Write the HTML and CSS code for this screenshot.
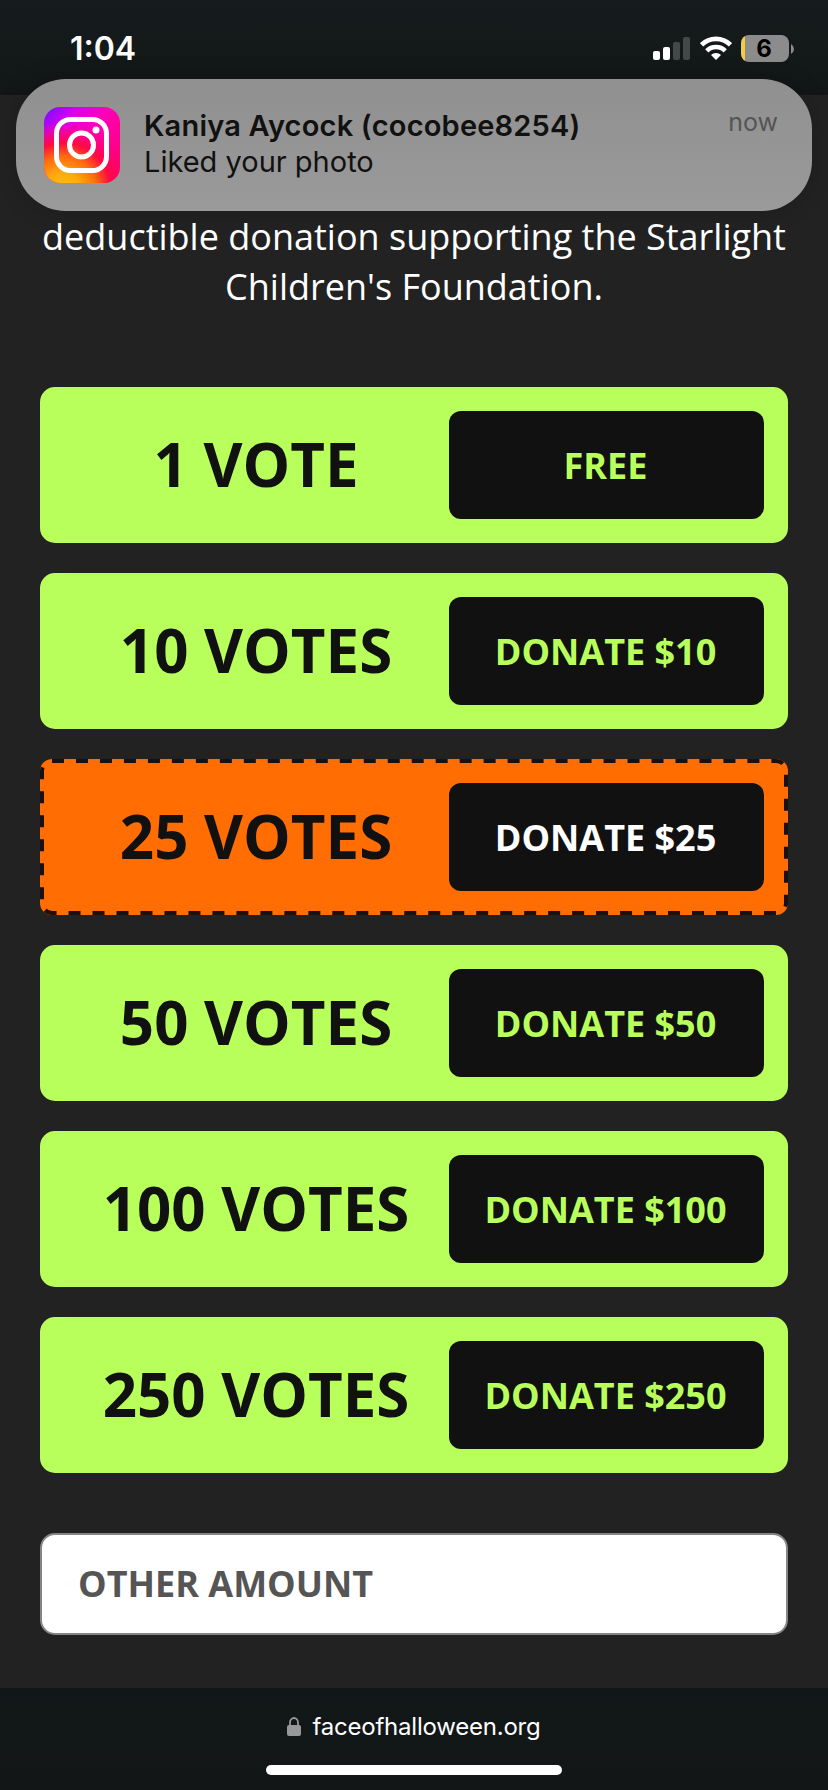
FILE: index.html
```html
<!DOCTYPE html>
<html lang="en">
<head>
<meta charset="utf-8">
<title>Face of Halloween</title>
<link rel="stylesheet" href="styles.css">
</head>
<body>
<div class="screen">
  <header class="status">
    <span class="time">1:04</span>
    <div class="indicators">
      <svg class="signal" width="38" height="24" viewBox="0 0 38 24">
        <rect x="0" y="14" width="7" height="9" rx="2" fill="#fff"/>
        <rect x="10" y="10" width="7" height="13" rx="2" fill="#fff"/>
        <rect x="20" y="5" width="7" height="18" rx="2" fill="#454849"/>
        <rect x="30" y="0" width="7" height="23" rx="2" fill="#454849"/>
      </svg>
      <svg class="wifi" width="32" height="24" viewBox="0 0 32 24">
        <path d="M1.500 8.800A20.500 20.500 0 0 1 30.500 8.800" fill="none" stroke="#fff" stroke-width="4.800"/>
        <path d="M6.800 14.800A13 13 0 0 1 25.200 14.800" fill="none" stroke="#fff" stroke-width="4.600"/>
        <path d="M16 24L11 19A7 7 0 0 1 21 19Z" fill="#fff"/>
      </svg>
      <div class="battery"><span class="charge">6</span></div>
      <svg class="cap" width="3" height="10" viewBox="0 0 3 10"><path d="M0 0Q3 2 3 5T0 10Z" fill="#8c8c8c"/></svg>
    </div>
  </header>

  <section class="notice">
    <svg class="app" width="76" height="76" viewBox="0 0 76 76">
      <defs>
        <linearGradient id="base" x1="0" y1="0" x2="1" y2="1">
          <stop offset="0" stop-color="#6a10ff"/><stop offset=".22" stop-color="#d800f0"/>
          <stop offset=".45" stop-color="#ff00b8"/><stop offset="1" stop-color="#ff0060"/>
        </linearGradient>
        <radialGradient id="warm" cx=".25" cy="1.1" r=".9">
          <stop offset="0" stop-color="#ffc60a"/><stop offset=".27" stop-color="#ffa810"/>
          <stop offset=".5" stop-color="#ff6a10"/><stop offset=".7" stop-color="#ff0a40"/>
          <stop offset="1" stop-color="#ff0070" stop-opacity="0"/>
        </radialGradient>
      </defs>
      <rect width="76" height="76" rx="16" fill="url(#base)"/>
      <rect width="76" height="76" rx="16" fill="url(#warm)"/>
      <rect x="12.500" y="12.500" width="50" height="51" rx="14" fill="none" stroke="#fff" stroke-width="5"/>
      <circle cx="37.500" cy="38" r="12" fill="none" stroke="#fff" stroke-width="5"/>
      <circle cx="52" cy="23" r="3.500" fill="#fff"/>
    </svg>
    <div class="message">
      <div class="sender"><span>Kaniya Aycock (cocobee8254)</span></div>
      <div class="action"><span>Liked your photo</span></div>
    </div>
    <span class="when">now</span>
  </section>

  <main class="page">
    <p class="intro">deductible donation supporting the Starlight<br>Children's Foundation.</p>
    <div class="options">
      <div class="option"><span class="votes">1 VOTE</span><span class="donate">FREE</span></div>
      <div class="option"><span class="votes">10 VOTES</span><span class="donate">DONATE $10</span></div>
      <div class="option featured">
        <svg class="dashes" width="748" height="156" viewBox="0 0 748 156"><rect x="2" y="2" width="744" height="152" rx="10" fill="none" stroke="#1a1010" stroke-width="4" stroke-dasharray="11.990 11.990"/></svg>
        <span class="votes">25 VOTES</span><span class="donate">DONATE $25</span>
      </div>
      <div class="option"><span class="votes">50 VOTES</span><span class="donate">DONATE $50</span></div>
      <div class="option"><span class="votes">100 VOTES</span><span class="donate">DONATE $100</span></div>
      <div class="option"><span class="votes">250 VOTES</span><span class="donate">DONATE $250</span></div>
    </div>
    <div class="amount">OTHER AMOUNT</div>
  </main>

  <footer class="browser">
    <div class="address">
      <svg class="lock" width="14" height="19" viewBox="0 0 14 19">
        <rect x="0" y="8" width="14" height="11" rx="2" fill="#96989a"/>
        <path d="M3 9V5.500a4 4.500 0 0 1 8 0V9" fill="none" stroke="#96989a" stroke-width="1.800"/>
      </svg>
      <span class="host">faceofhalloween.org</span>
    </div>
    <div class="home"></div>
  </footer>
</div>
</body>
</html>
```
FILE: styles.css
```css
* { box-sizing: border-box; }
body { margin: 0; background: #222; }
.screen {
  position: relative;
  display: flex;
  flex-direction: column;
  width: 828px;
  height: 1790px;
  overflow: hidden;
  background: #222;
  font-family: Inter, "Liberation Sans", sans-serif;
  white-space: nowrap;
}
.status {
  display: flex;
  justify-content: space-between;
  align-items: flex-start;
  height: 95px;
  padding: 28px 34px 0 70px;
  background: linear-gradient(#161c1d, #121617);
  color: #fff;
}
.time { padding-top: 1px; font-size: 32px; font-weight: 600; line-height: 40px; }
.indicators { display: flex; align-items: flex-start; padding-top: 7px; }
.signal { margin-top: 2px; }
.wifi { margin: 1px 0 0 9px; }
.battery {
  display: flex;
  justify-content: center;
  align-items: center;
  width: 48px;
  height: 27px;
  margin-left: 9px;
  padding-right: 2px;
  border-radius: 8px;
  background: linear-gradient(90deg, #f0cf45 4px, #8c8c8c 4px);
}
.charge { color: #000; font-size: 24px; font-weight: 700; line-height: 27px; }
.cap { margin: 9px 0 0 2px; }
/* Notification banner floats over the status bar and page */
.notice {
  position: absolute;
  top: 79px;
  left: 16px;
  display: flex;
  width: 796px;
  height: 132px;
  padding: 28px 34px 0 28px;
  border-radius: 50px;
  background: linear-gradient(#909090, #9a9a9a);
  color: #111;
  box-shadow: 0 0 24px rgba(0, 0, 0, .18);
}
.message { flex: 1; padding: 1px 0 0 24px; }
.sender { font-size: 29px; font-weight: 600; line-height: 36px; letter-spacing: .2px; }
.action { font-size: 29px; line-height: 36px; }
.when { color: #555; font-size: 25px; line-height: 30px; }
.page {
  display: flex;
  flex: 1;
  flex-direction: column;
  padding: 117px 40px 0;
  font-family: "Open Sans", "Noto Sans", sans-serif;
}
.intro {
  height: 100px;
  margin: 0;
  color: #fff;
  font-size: 36px;
  line-height: 50px;
  text-align: center;
}
.options { display: flex; flex-direction: column; gap: 30px; margin-top: 75px; }
.option {
  position: relative;
  display: flex;
  align-items: center;
  height: 156px;
  padding: 24px;
  border-radius: 15px;
  background: #b9ff5c;
}
.featured { border-radius: 12px; background: #ff6d03; }
.dashes { position: absolute; inset: 0; }
.votes {
  flex: 1;
  padding: 0 1px 2px 0;
  color: #111;
  font-size: 60px;
  font-weight: 700;
  line-height: 80px;
  text-align: center;
}
.donate {
  display: flex;
  justify-content: center;
  align-items: center;
  width: 315px;
  height: 108px;
  padding-right: 2px;
  border-radius: 12px;
  background: #111;
  color: #b9ff5c;
  font-size: 36px;
  font-weight: 700;
}
.featured .donate { color: #fff; }
.amount {
  display: flex;
  align-items: center;
  height: 102px;
  margin-top: 60px;
  padding: 0 0 2px 36px;
  border: 2px solid #858585;
  border-radius: 15px;
  background: #fff;
  color: #555;
  font-size: 36px;
  font-weight: 700;
}
.browser {
  display: flex;
  flex-direction: column;
  align-items: center;
  height: 102px;
  background: linear-gradient(#111718, #131616);
}
.address { display: flex; gap: 11px; height: 77px; padding-top: 24px; }
.lock { margin-top: 5px; }
.host { color: #fff; font-size: 24px; line-height: 30px; letter-spacing: -.22px; }
.home { width: 296px; height: 10px; border-radius: 5px; background: #fff; }
```
